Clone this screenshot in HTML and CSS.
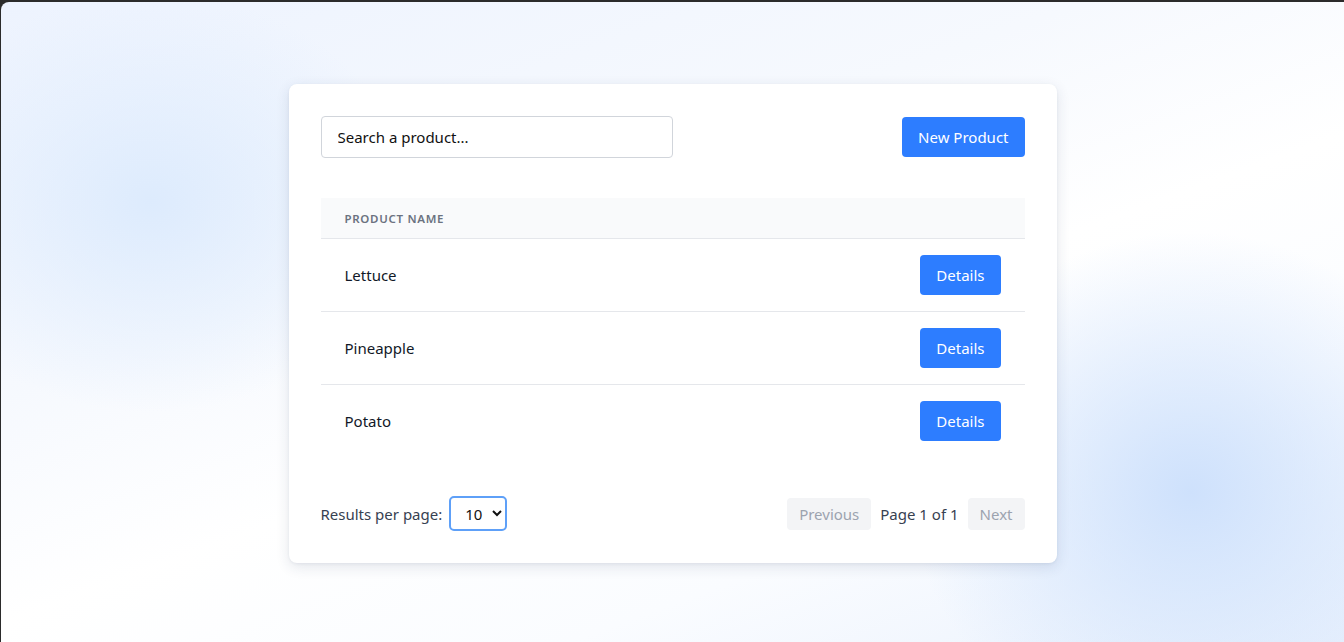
FILE: index.html
```html
<!DOCTYPE html>
<html>
<head>
<meta charset="utf-8">
<link rel="stylesheet" href="styles.css">
</head>
<body>
<div class="window">
  <div class="card">
    <div class="toolbar">
      <input class="search" type="text" placeholder="Search a product...">
      <button class="btn primary new">New Product</button>
    </div>
    <table class="table">
      <thead>
        <tr><th>Product Name</th><th></th></tr>
      </thead>
      <tbody>
        <tr><td>Lettuce</td><td class="act"><button class="btn primary">Details</button></td></tr>
        <tr><td>Pineapple</td><td class="act"><button class="btn primary">Details</button></td></tr>
        <tr><td>Potato</td><td class="act"><button class="btn primary">Details</button></td></tr>
      </tbody>
    </table>
    <div class="footer">
      <div class="perpage">
        <span>Results per page:</span>
        <select class="select"><option>10</option><option>20</option></select>
      </div>
      <div class="pager">
        <button class="btn pg">Previous</button>
        <span class="pageinfo">Page 1 of 1</span>
        <button class="btn pg">Next</button>
      </div>
    </div>
  </div>
</div>
</body>
</html>
```
FILE: styles.css
```css
html, body {
  margin: 0;
  padding: 0;
  height: 100%;
}
body {
  background: #2b2b2b;
  font-family: "Segoe UI", "Noto Sans", "Open Sans", sans-serif;
  overflow: hidden;
}
.window {
  margin: 2px 0 0 1px;
  height: 640px;
  border-top-left-radius: 8px;
  background:
    radial-gradient(ellipse 260px 210px at 150px 200px, rgba(221, 235, 253, 1), rgba(221, 235, 253, 0) 100%),
    radial-gradient(ellipse 280px 260px at 1190px 490px, rgba(206, 225, 252, 1), rgba(206, 225, 252, 0) 100%),
    linear-gradient(160deg, #edf3fe 0%, #f6f9fe 35%, #ffffff 55%, #fafcff 75%, #e9f1fd 100%);
  display: flex;
  justify-content: center;
  align-items: flex-start;
  padding-top: 82px;
  box-sizing: border-box;
}
.card {
  width: 768px;
  box-sizing: border-box;
  background: #fff;
  border-radius: 8px;
  box-shadow: 0 4px 14px rgba(30, 50, 90, 0.12), 0 1px 3px rgba(30, 50, 90, 0.06);
  padding: 32px;
}
.toolbar {
  display: flex;
  justify-content: space-between;
  align-items: center;
  margin-bottom: 40px;
}
.search {
  width: 352px;
  height: 42px;
  box-sizing: border-box;
  border: 1px solid #d1d5db;
  border-radius: 4px;
  padding: 0 16px;
  font: inherit;
  font-size: 15px;
  color: #111;
  outline: none;
}
.search::placeholder {
  color: #111;
}
.btn {
  font: inherit;
  border: none;
  border-radius: 4px;
  cursor: pointer;
}
.primary {
  background: #2d7dff;
  color: #fff;
  font-size: 15px;
  height: 40px;
  padding: 0 16px;
}
.table {
  width: 100%;
  border-collapse: collapse;
}
.table th {
  background: #f9fafb;
  text-align: left;
  font-size: 11.5px;
  font-weight: 600;
  text-transform: uppercase;
  letter-spacing: 0.06em;
  color: #6b7280;
  height: 40px;
  padding: 0 24px;
  border-bottom: 1px solid #e5e7eb;
}
.table td {
  padding: 16px 24px;
  font-size: 15px;
  color: #111827;
  border-bottom: 1px solid #e5e7eb;
  height: 40px;
}
.table tbody tr:last-child td {
  border-bottom: none;
}
.table td.act {
  text-align: right;
}
.footer {
  display: flex;
  justify-content: space-between;
  align-items: center;
  margin-top: 39px;
}
.perpage {
  display: flex;
  align-items: center;
  gap: 7px;
  font-size: 15px;
  color: #374151;
}
.select {
  height: 35px;
  width: 58px;
  box-sizing: border-box;
  border: 2px solid #5ea0f8;
  border-radius: 5px;
  font: inherit;
  font-size: 15px;
  padding: 0 6px 0 10px;
  background: #fff;
  color: #111;
}
.pager {
  display: flex;
  align-items: center;
  gap: 9px;
}
.pg {
  background: #f3f4f6;
  color: #9ca3af;
  font-size: 15px;
  height: 32px;
  padding: 0 12px;
}
.pageinfo {
  font-size: 15px;
  color: #374151;
}
```
